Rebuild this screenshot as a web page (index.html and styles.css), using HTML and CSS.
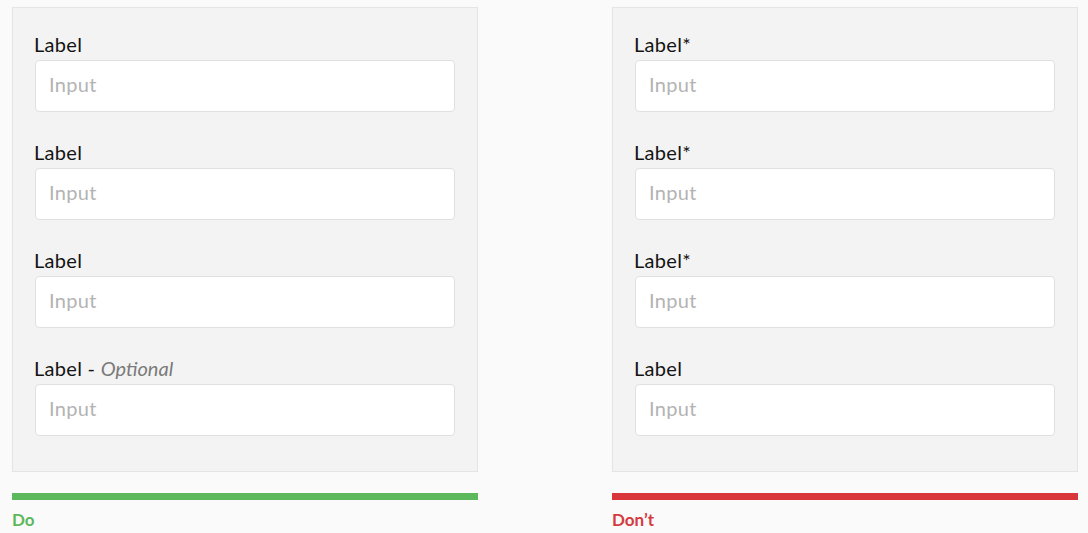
FILE: index.html
```html
<!DOCTYPE html>
<html lang="en">
<head>
    <meta charset="UTF-8">
    <meta name="viewport" content="width=device-width, initial-scale=1.0">
    <title>Form labels - Do / Don't</title>
    <link rel="stylesheet" href="styles.css">
</head>
<body>
    <div class="columns">
        <div class="example">
            <div class="panel">
                <div class="field">
                    <label>Label</label>
                    <input type="text" placeholder="Input">
                </div>
                <div class="field">
                    <label>Label</label>
                    <input type="text" placeholder="Input">
                </div>
                <div class="field">
                    <label>Label</label>
                    <input type="text" placeholder="Input">
                </div>
                <div class="field">
                    <label>Label - <em class="optional">Optional</em></label>
                    <input type="text" placeholder="Input">
                </div>
            </div>
            <div class="bar do"></div>
            <p class="caption do">Do</p>
        </div>

        <div class="example">
            <div class="panel">
                <div class="field">
                    <label>Label*</label>
                    <input type="text" placeholder="Input">
                </div>
                <div class="field">
                    <label>Label*</label>
                    <input type="text" placeholder="Input">
                </div>
                <div class="field">
                    <label>Label*</label>
                    <input type="text" placeholder="Input">
                </div>
                <div class="field">
                    <label>Label</label>
                    <input type="text" placeholder="Input">
                </div>
            </div>
            <div class="bar dont"></div>
            <p class="caption dont">Don’t</p>
        </div>
    </div>
</body>
</html>
```

FILE: styles.css
```css
body {
    font-family: Lato, "Open Sans", sans-serif;
    margin: 0;
    padding: 7px 10px 0 12px;
    background-color: #fafafa;
}

.columns {
    display: flex;
    gap: 134px;
}

.example {
    width: 466px;
}

.panel {
    background: #f3f3f3;
    border: 1px solid #e4e4e4;
    padding: 24px 22px 35px 21px;
}

.field {
    margin-bottom: 28px;
}

.field:last-child {
    margin-bottom: 0;
}

label {
    display: block;
    font-size: 20px;
    letter-spacing: 0.3px;
    line-height: 24px;
    color: #141414;
    margin-bottom: 4px;
}

.optional {
    color: #7a7a7a;
    letter-spacing: 0;
}

input {
    display: block;
    box-sizing: border-box;
    width: 420px;
    margin-left: 1px;
    height: 52px;
    padding: 0 13px 4px 13px;
    font-family: Lato, sans-serif;
    font-size: 20px;
    letter-spacing: 0.3px;
    background: #fff;
    border: 1px solid #e0e0e0;
    border-radius: 4px;
}

input::placeholder {
    color: #b3b3b3;
}

.bar {
    height: 7px;
    margin-top: 21px;
}

.bar.do {
    background-color: #5cb85c;
}

.bar.dont {
    background-color: #d9363b;
}

.caption {
    margin: 9px 0 0 0;
    font-size: 17px;
    font-weight: bold;
}

.caption.do {
    color: #5cb85c;
}

.caption.dont {
    color: #d43a3f;
}
```
